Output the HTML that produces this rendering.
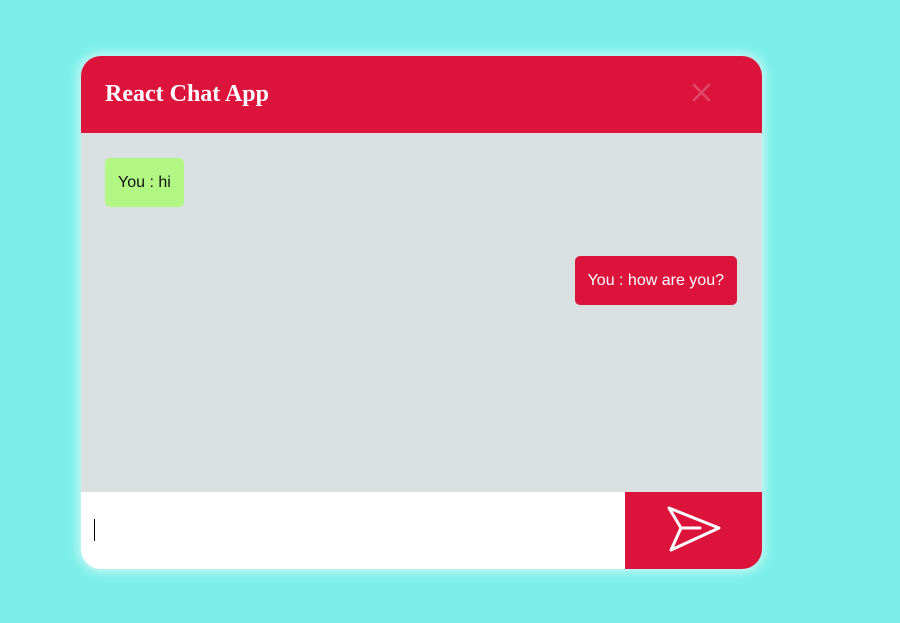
<!DOCTYPE html>
<html><head><style>
body{margin:0;width:900px;height:623px;background:#7cefe9;position:relative;overflow:hidden;font-family:"Liberation Sans",sans-serif}
.card{position:absolute;left:81px;top:56px;width:681px;height:513px;border-radius:20px;overflow:hidden;background:#dae0e1;box-shadow:0 0 10px 3px rgba(255,255,255,.6)}
.hd{position:absolute;left:0;top:0;width:681px;height:77px;background:#dc143c}
.hd h1{position:absolute;left:24px;top:25px;margin:0;font:bold 24px "Liberation Serif",serif;color:#fff}
.b{position:absolute;border-radius:5px;font-size:16px;line-height:50px;height:49px;padding:0 13px}
.in{position:absolute;left:0;top:436px;width:544px;height:77px;background:#fff}
.cur{position:absolute;left:13px;top:27px;width:1px;height:22px;background:#000}
.send{position:absolute;left:544px;top:436px;width:137px;height:77px;background:#dc143c}
</style></head><body>
<div class="card">
<div class="hd"><h1>React Chat App</h1>
<svg style="position:absolute;left:611px;top:27px" width="19" height="19"><path d="M2 2L17 17M17 2L2 17" stroke="#e24a69" stroke-width="2.5" stroke-linecap="round"/></svg></div>
<div class="b" style="left:24px;top:102px;background:#b2f784;color:#111">You : hi</div>
<div class="b" style="right:25px;top:200px;background:#dc143c;color:#fff">You : how are you?</div>
<div class="in"><div class="cur"></div></div>
<div class="send"><svg width="137" height="77"><path d="M44 16L94 36L46 58L56 36L44 16ZM56 36L75 36" fill="none" stroke="#fff" stroke-width="3" stroke-linejoin="round" stroke-linecap="round"/></svg></div>
</div>
</body></html>
